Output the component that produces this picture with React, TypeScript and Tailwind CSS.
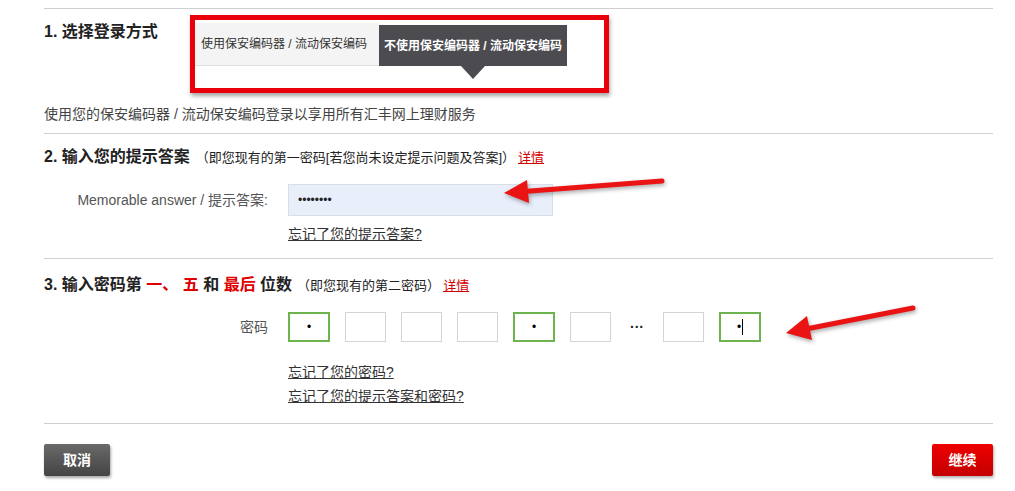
const FONT = "font-['Liberation_Sans','Noto_Sans_CJK_SC',sans-serif]";

type Box = { filled: boolean; cursor?: boolean };

const BOXES: (Box | "gap")[] = [
  { filled: true },
  { filled: false },
  { filled: false },
  { filled: false },
  { filled: true },
  { filled: false },
  "gap",
  { filled: false },
  { filled: true, cursor: true },
];

function PinBox({ box }: { box: Box }) {
  if (box.filled) {
    return (
      <div className="w-[42px] h-[30px] border-2 border-[#6db44f] flex items-center justify-center bg-white">
        <span className="text-[12px] leading-none text-black">•</span>
        {box.cursor && <span className="ml-[1px] w-px h-[16px] bg-black" />}
      </div>
    );
  }
  return <div className="w-[41px] h-[30px] border border-[#d4d4d4] bg-white" />;
}

function Arrows() {
  return (
    <svg
      className="absolute inset-0 pointer-events-none drop-shadow-[1px_2px_2px_rgba(0,0,0,0.35)]"
      width={1015}
      height={491}
      viewBox="0 0 1015 491"
    >
      <line x1={662} y1={181} x2={524} y2={191.5} stroke="#ea1414" strokeWidth={5} strokeLinecap="round" />
      <polygon points="504,193 529,203 527,180" fill="#ea1414" />
      <line x1={913} y1={308} x2={806} y2={329} stroke="#ea1414" strokeWidth={5} strokeLinecap="round" />
      <polygon points="786,333 812,340 807,316" fill="#ea1414" />
    </svg>
  );
}

export default function App() {
  return (
    <div className={`relative w-[1015px] h-[491px] bg-white overflow-hidden ${FONT}`}>
      <div className="pl-[44px] pr-[22px] pt-[8px]">
        {/* section 1 */}
        <section className="border-t border-[#cfcfcf]">
          <div className="flex items-start">
            <h2 className="mt-[13px] w-[146px] text-[16px] leading-[20px] font-bold text-[#222]">
              1. 选择登录方式
            </h2>
            <div className="mt-[6px] w-[419px] h-[78px] border-[5px] border-[#e8000b] shadow-[1px_3px_4px_rgba(0,0,0,0.35)] bg-white">
              <div className="mt-[3px] flex items-end">
                <div className="w-[184px] h-[43px] bg-[#f4f4f4] border-b border-[#e1e1e1] flex items-center pl-[6px] text-[12px] text-[#333]">
                  使用保安编码器 / 流动保安编码
                </div>
                <div className="relative w-[188px] h-[41px] bg-[#4b4b50] flex items-center justify-center text-[12px] font-bold text-white">
                  不使用保安编码器 / 流动保安编码
                  <span className="absolute left-1/2 -translate-x-1/2 top-full w-0 h-0 border-l-[12px] border-r-[12px] border-t-[13px] border-l-transparent border-r-transparent border-t-[#4b4b50]" />
                </div>
              </div>
            </div>
          </div>
          <p className="mt-[11px] text-[14px] leading-[20px] text-[#444]">
            使用您的保安编码器 / 流动保安编码登录以享用所有汇丰网上理财服务
          </p>
          <div className="h-[9px]" />
        </section>

        {/* section 2 */}
        <section className="border-t border-[#cfcfcf] pt-[13px] pb-[15px]">
          <h2 className="text-[16px] leading-[20px] font-bold text-[#222]">
            2. 输入您的提示答案
            <span className="ml-[6px] text-[13px] font-normal text-[#222]">
              （即您现有的第一密码[若您尚未设定提示问题及答案]）
            </span>
            <a className="ml-[3px] text-[13px] font-normal text-[#d40000] underline">详情</a>
          </h2>
          <div className="mt-[16px] flex items-center">
            <label className="w-[224px] text-right text-[14px] leading-[20px] text-[#555]">
              Memorable answer / 提示答案:
            </label>
            <div className="ml-[20px] w-[265px] h-[32px] bg-[#e8effb] border border-[#d9dee6] flex items-center pl-[9px] text-[12px] text-[#222]">
              ••••••••
            </div>
          </div>
          <div className="mt-[9px] pl-[244px] text-[14px] leading-[18px]">
            <a className="text-[#333] underline">忘记了您的提示答案? </a>
          </div>
        </section>

        {/* section 3 */}
        <section className="border-t border-[#cfcfcf] pt-[16px] pb-[18px]">
          <h2 className="text-[16px] leading-[20px] font-bold text-[#222]">
            3. 输入密码第 <span className="text-[#e00000]">一、</span> <span className="text-[#e00000]">五</span> 和{" "}
            <span className="text-[#e00000]">最后</span> 位数
            <span className="ml-[5px] text-[13px] font-normal text-[#222]">（即您现有的第二密码）</span>
            <a className="ml-[3px] text-[13px] font-normal text-[#d40000] underline">详情</a>
          </h2>
          <div className="mt-[16px] flex items-center">
            <label className="w-[224px] text-right text-[14px] leading-[20px] text-[#555]">密码</label>
            <div className="ml-[20px] flex items-center gap-[15px]">
              {BOXES.map((b, i) =>
                b === "gap" ? (
                  <span key={i} className="w-[22px] text-center text-[14px] leading-[20px] font-bold text-[#222]">
                    ···
                  </span>
                ) : (
                  <PinBox key={i} box={b} />
                )
              )}
            </div>
          </div>
          <div className="mt-[21px] pl-[244px] flex flex-col gap-[6px] items-start text-[14px] leading-[18px]">
            <a className="text-[#333] underline">忘记了您的密码? </a>
            <a className="text-[#333] underline">忘记了您的提示答案和密码? </a>
          </div>
        </section>

        {/* actions */}
        <div className="border-t border-[#cfcfcf] pt-[20px] flex justify-between">
          <button className="w-[66px] h-[32px] rounded-[2px] bg-gradient-to-b from-[#6a6a6a] to-[#444] shadow-[1px_2px_3px_rgba(0,0,0,0.35)] text-white text-[14px] font-bold">
            取消
          </button>
          <button className="w-[61px] h-[32px] rounded-[2px] bg-gradient-to-b from-[#ee0000] to-[#c40000] shadow-[1px_2px_3px_rgba(0,0,0,0.3)] text-white text-[14px] font-bold">
            继续
          </button>
        </div>
      </div>
      <Arrows />
    </div>
  );
}
